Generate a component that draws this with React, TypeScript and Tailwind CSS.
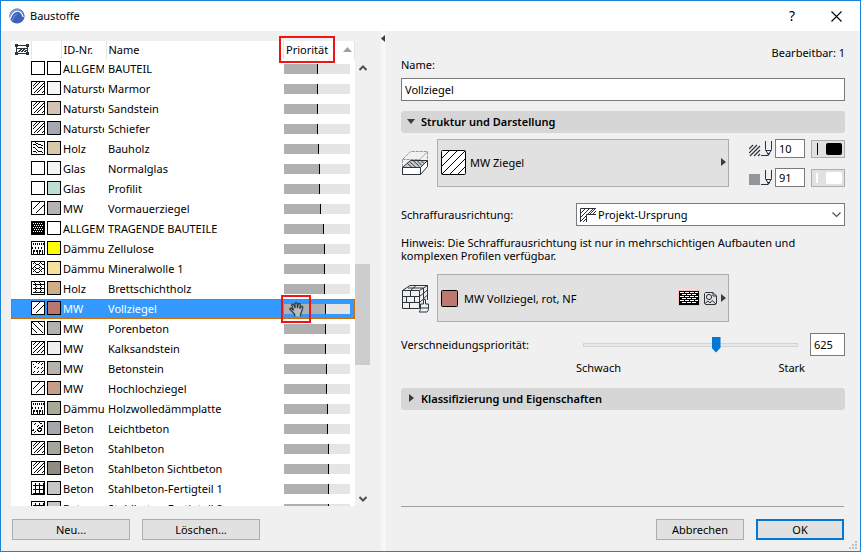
import React, { useState } from 'react';
import clsx from 'clsx';

type Hatch =
  | 'empty'
  | 'stone'
  | 'wood'
  | 'brick'
  | 'dots'
  | 'fill'
  | 'wool'
  | 'glulam'
  | 'back'
  | 'dense'
  | 'dashed'
  | 'light'
  | 'grid';

type Material = {
  hatch: Hatch;
  color: string;
  id: string;
  name: string;
  priority: number;
};

const materials: Material[] = [
  { hatch: 'empty', color: '#ffffff', id: 'ALLGEM', name: 'BAUTEIL', priority: 500 },
  { hatch: 'stone', color: '#f5f6f7', id: 'Naturste', name: 'Marmor', priority: 500 },
  { hatch: 'stone', color: '#d2c4b4', id: 'Naturste', name: 'Sandstein', priority: 500 },
  { hatch: 'stone', color: '#a5a9af', id: 'Naturste', name: 'Schiefer', priority: 500 },
  { hatch: 'wood', color: '#d9c9a9', id: 'Holz', name: 'Bauholz', priority: 516 },
  { hatch: 'empty', color: '#eff6f3', id: 'Glas', name: 'Normalglas', priority: 531 },
  { hatch: 'empty', color: '#bbdfd2', id: 'Glas', name: 'Profilit', priority: 531 },
  { hatch: 'brick', color: '#b5b4b2', id: 'MW', name: 'Vormauerziegel', priority: 546 },
  { hatch: 'dots', color: '#ffffff', id: 'ALLGEM', name: 'TRAGENDE BAUTEILE', priority: 592 },
  { hatch: 'fill', color: '#ffff00', id: 'Dämmun', name: 'Zellulose', priority: 607 },
  { hatch: 'wool', color: '#f6e09c', id: 'Dämmun', name: 'Mineralwolle 1', priority: 607 },
  { hatch: 'glulam', color: '#cfae86', id: 'Holz', name: 'Brettschichtholz', priority: 607 },
  { hatch: 'brick', color: '#bb776e', id: 'MW', name: 'Vollziegel', priority: 625 },
  { hatch: 'back', color: '#b2b1ae', id: 'MW', name: 'Porenbeton', priority: 625 },
  { hatch: 'dense', color: '#f0f0f0', id: 'MW', name: 'Kalksandstein', priority: 625 },
  { hatch: 'dashed', color: '#b5b3ac', id: 'MW', name: 'Betonstein', priority: 637 },
  { hatch: 'brick', color: '#c49e86', id: 'MW', name: 'Hochlochziegel', priority: 637 },
  { hatch: 'fill', color: '#a9aa96', id: 'Dämmun', name: 'Holzwolledämmplatte', priority: 652 },
  { hatch: 'light', color: '#a4a8ad', id: 'Beton', name: 'Leichtbeton', priority: 652 },
  { hatch: 'stone', color: '#a5a69b', id: 'Beton', name: 'Stahlbeton', priority: 668 },
  { hatch: 'stone', color: '#928b84', id: 'Beton', name: 'Stahlbeton Sichtbeton', priority: 668 },
  { hatch: 'grid', color: '#c6c6c6', id: 'Beton', name: 'Stahlbeton-Fertigteil 1', priority: 668 },
  { hatch: 'grid', color: '#c6c6c6', id: 'Beton', name: 'Stahlbeton-Fertigteil 2', priority: 668 },
];

// Coordinates are pixel indexes inside the 14px swatch
const hatchPaths: Record<Hatch, string> = {
  empty: '',
  stone: 'M1 5L5 1M1 8L8 1M2 12L12 2M5 12L12 5M10 12L12 10',
  wood: 'M1 3L4 3L7 6L10 6L12 8M1 6L3 6L7 10L10 10L12 12M4 1L7 3L9 3L12 5M1 10L4 10L6 12',
  brick: 'M1 8L8 1M4 12L12 4',
  dots: '',
  fill: 'M2 1V3M4 1V3M6 1V3M8 1V3M10 1V3M12 1V3M1 5V7M4 5V7M7 5V7M10 5V7M2 8V12M3 8V10M5 8V10M6 8V12M8 8V12M9 8V10M11 8V12',
  wool: 'M1 3L3 1L5 3L7 3L9 1L11 3L12 3M3 5L5 3M7 3L9 5M1 7L3 5L5 7L7 7L9 5L11 7L12 7M1 7L3 9L5 7M7 7L9 9L11 7M1 11L3 9L5 11L7 11L9 9L11 11',
  glulam: 'M1 3H12M1 7H12M1 11H12M3 1L5 3M8 1L10 3M3 7L5 5L3 3M8 7L10 5L8 3M3 11L5 9L3 7M8 11L10 9L8 7',
  back: 'M1 1L12 12M7 1L12 6M1 7L6 12',
  dense: 'M1 4L4 1M1 8L8 1M1 12L12 1M5 12L12 5M9 12L12 9',
  dashed: 'M1 4L2 3M4 2L5 1M2 7L4 5M6 3L8 1M1 12L3 10M5 8L7 6M9 4L11 2M5 12L7 10M9 8L11 6M9 12L12 9M1 9H1.5M11 11H11.5',
  light: 'M2 4L4 2M8 1L11 3M1 9L3 8M7 7L9 6L10 8L9 10L7 10L6 8ZM2 12L4 10M10 5L12 4M5 6L7 4M2 2H2.5',
  grid: 'M4 1V12M8 1V12M12 1V12M1 4H12M1 8H12M1 12H12',
};

const HatchIcon = ({ hatch }: { hatch: Hatch }) => (
  <svg width="14" height="14" viewBox="0 0 14 14" shapeRendering="crispEdges" className="block">
    <rect width="14" height="14" fill={hatch === 'dots' ? '#000' : '#fff'} />
    {hatch === 'dots' &&
      [2, 4, 6, 8, 10].map((y, row) =>
        [2, 4, 6, 8, 10].map((x) => (
          <rect key={`${x}-${y}`} x={row % 2 ? x + 1 : x} y={y} width="1" height="1" fill="#fff" />
        ))
      )}
    <g transform="translate(0.5 0.5)" fill="none" stroke="#000">
      <path d={hatchPaths[hatch]} />
      <path d="M0 0H13V13H0Z" />
    </g>
  </svg>
);

const Swatch = ({ color }: { color: string }) => (
  <svg width="14" height="14" viewBox="0 0 14 14" shapeRendering="crispEdges" className="block">
    <rect x="0.5" y="0.5" width="13" height="13" fill={color} stroke="#000" />
  </svg>
);

const AppLogo = () => (
  <svg width="16" height="16" viewBox="0 0 16 16">
    <circle cx="8" cy="8" r="7.6" fill="#3d62b8" />
    <path d="M0.8 10.5C2.5 5 5.5 2 9 2C11.5 2 13.5 4 15 7.5C14 2.5 11 0.3 7.8 0.4C3.5 0.5 0 4.5 0.8 10.5Z" fill="#7fa0dc" />
    <path d="M1 11C3 6 5.6 3.2 8.6 3.2C11.4 3.2 13 5.5 14.2 9" fill="none" stroke="#fff" strokeWidth="1.3" />
    <path d="M3 13C4.4 9.2 6 6.6 8.5 6" fill="none" stroke="#6d8fd4" strokeWidth="1.2" />
  </svg>
);

const FrameIcon = () => (
  <svg width="14" height="12" viewBox="0 0 14 12" shapeRendering="crispEdges">
    <path d="M1.5 1V10M12.5 1V10M1 1.5H13M1 9.5H13" stroke="#2b343a" fill="none" />
    <path d="M0 0h3v3H0zM11 0h3v3h-3zM0 8h3v3H0zM11 8h3v3h-3z" fill="#2b343a" />
    <path d="M2 4.5H12M3.5 8L6.5 5M6.5 8L9.5 5M9.5 8L11.5 6" stroke="#2b343a" fill="none" />
  </svg>
);

const HandCursor = () => (
  <svg width="15" height="15" viewBox="0 0 15 15">
    <path
      d="M6 14.5L5.5 12L1 7.5L1 6.3L2.3 6.2L4.6 8.3L2.7 3L3.6 2L4.8 2.8L6.2 6L6 1.5L7 0.5L8.2 1.5L8.4 6L9.3 2L10.5 1.4L11.3 2.5L10.8 6.8L12 4.5L13.2 4.2L13.8 5.4L12.5 10L11.5 12L11.7 14.5"
      fill="#b9bcbd"
      stroke="#2b3a40"
      strokeWidth="1.2"
    />
  </svg>
);

const CutFillIcon = () => (
  <svg width="28" height="26" viewBox="0 0 28 26">
    <path d="M1.5 17V9.5L9.5 1.5H26.5V10M1.5 9.5H19L26.5 1.5M19 9.5V16" fill="none" stroke="#90979b" strokeDasharray="3 1" />
    <path d="M1.5 17.5L9.5 10.5H26.5L19.5 17.5Z" fill="#c9cdcf" stroke="#2b343a" />
    <path d="M6 13L11 17.5M8 11L15 17.5M12 10.5L18.5 16.5M16 10.5L21 15.5M20 10.5L23 13.5" stroke="#2b343a" fill="none" />
    <path d="M1.5 17.5H19.5V24.5H1.5Z" fill="#fff" stroke="#2b343a" />
    <path d="M19.5 17.5L26.5 10.5V16.5L19.5 24.5Z" fill="#fff" stroke="#2b343a" />
  </svg>
);

const BrickIcon = () => (
  <svg width="28" height="29" viewBox="0 0 28 29" fill="none" stroke="#2b343a">
    <path d="M1.5 6.5H18.5V24.5H1.5ZM1.5 12.5H18.5M1.5 18.5H18.5" />
    <path d="M9.5 6.5V12.5M5.5 12.5V18.5M13.5 12.5V18.5M8.5 18.5V24.5" />
    <path d="M1.5 6.5L9 1.5H26.5L18.5 6.5M7 4L22 4M15 1.5L9.5 6.5M26.5 1.5V16M18.5 12.5L26.5 6M18.5 18.5L26.5 11M22.5 4V15" />
    <path d="M22.5 20V15.5H24.5V20H27.5V24H19.5V20H22.5M19.5 24C19.5 26 19 27 18 28H26C27 27 27.5 26 27.5 24" fill="#f0f0f0" />
  </svg>
);

const PenIcon = ({ solid }: { solid?: boolean }) => (
  <svg width="24" height="17" viewBox="0 0 24 17" className="shrink-0">
    {solid ? (
      <rect x="0" y="5" width="11" height="11" fill="#939799" />
    ) : (
      <path d="M0 9L4 5M0 13L8 5M1 16L11 6M5 16L11 10M9 16L11 14" stroke="#2b343a" strokeWidth="1.2" fill="none" />
    )}
    <path d="M12 15.5H19M16.5 1V9.5L19.5 15L22.5 9.5V1M16.5 10.5H22.5" stroke="#2b343a" fill="none" />
    <path d="M18 13H21L19.5 16Z" fill="#2b343a" />
  </svg>
);

const OriginIcon = () => (
  <svg width="16" height="14" viewBox="0 0 16 14">
    <path d="M0.5 14V0.5H16M6.5 14V6.5H16" fill="none" stroke="#2b343a" />
    <path d="M1 5L5 1M1 9L9 1M1 13L13 1M10 6L15 1M3 14L6 11M13 6L16 3" fill="none" stroke="#2b343a" />
  </svg>
);

const BrickPattern = () => (
  <svg width="22" height="16" viewBox="0 0 22 16" shapeRendering="crispEdges">
    <rect width="22" height="16" fill="#ffc0bb" />
    <rect x="1" y="1" width="20" height="14" fill="#000" />
    {[2, 4, 6, 8, 10, 12].map((y, row) =>
      (row % 2 ? [4, 9, 14] : [2, 7, 12, 17]).map((x) => (
        <rect key={`${x}-${y}`} x={x} y={y} width={x === 17 ? 3 : 4} height="1" fill="#fff" />
      ))
    )}
  </svg>
);

const TextureIcon = () => (
  <svg width="13" height="13" viewBox="0 0 13 13" fill="none" stroke="#2b343a">
    <path d="M1.5 0.5H9L12.5 4V11.5L11.5 12.5H1.5L0.5 11.5V1.5Z" />
    <path d="M9 0.5V4H12.5" />
    <circle cx="5" cy="5" r="2.6" />
    <path d="M1 11.5L4 9L6 11L8 8.5L12 12" />
  </svg>
);

const ArrowRight = () => (
  <svg width="5" height="8" viewBox="0 0 5 8" className="shrink-0">
    <path d="M0 0L5 4L0 8Z" fill="#3c3c3c" />
  </svg>
);

const Section = ({ title, open }: { title: string; open?: boolean }) => (
  <button className="flex h-[22px] w-full items-center rounded-[3px] bg-[#d6d6d6] px-1.5 pb-0.5 text-left font-semibold">
    <span className="flex w-3.5 items-center">
      {open ? (
        <svg width="8" height="5" viewBox="0 0 8 5">
          <path d="M0 0H8L4 5Z" fill="#3c3c3c" />
        </svg>
      ) : (
        <span className="pl-0.5">
          <ArrowRight />
        </span>
      )}
    </span>
    {title}
  </button>
);

const PushButton = ({ children, className }: { children: React.ReactNode; className: string }) => (
  <button className={clsx('h-[21px] bg-[#e1e1e1] leading-none', className)}>{children}</button>
);

const MaterialTable = ({ selected, onSelect }: { selected: number; onSelect: (i: number) => void }) => (
  <div className="min-w-0 flex-1 overflow-hidden bg-white">
    <table className="w-full table-fixed border-collapse">
      <colgroup>
        <col className="w-5" />
        <col className="w-[30px]" />
        <col className="w-[45px]" />
        <col />
        <col className="w-[71px]" />
      </colgroup>
      <thead>
        <tr className="h-[18px] text-left">
          <th className="border-r border-[#e5e5e5] p-0 pl-1">
            <FrameIcon />
          </th>
          <th className="border-r border-[#e5e5e5] p-0" />
          <th className="border-r border-[#e5e5e5] p-0 pb-0.5 pl-0.5 font-normal">ID-Nr.</th>
          <th className="border-r border-[#e5e5e5] p-0 pb-0.5 pl-0.5 font-normal">Name</th>
          <th className="border-r border-[#e5e5e5] p-0 pb-0.5 pl-0.5 font-normal">
            <div className="flex items-center justify-between pr-0.5">
              Priorität
              <svg width="9" height="5" viewBox="0 0 9 5">
                <path d="M4.5 0L9 5H0Z" fill="#a0a0a0" />
              </svg>
            </div>
          </th>
        </tr>
      </thead>
      <tbody>
        {materials.map((m, i) => (
          <tr
            key={m.name}
            onClick={() => onSelect(i)}
            className={clsx(
              'h-5',
              i === selected && 'bg-[#3399ff] text-white outline-1 -outline-offset-1 outline-dotted outline-[#cc6600]'
            )}
          >
            <td className="p-0" />
            <td className="p-0">
              <div className="flex h-5 w-8 gap-0.5 pt-0.5">
                <HatchIcon hatch={m.hatch} />
                <Swatch color={m.color} />
              </div>
            </td>
            <td className="p-0 pb-0.5 pl-0.5">
              <div className="w-[41px] overflow-hidden whitespace-nowrap">{m.id}</div>
            </td>
            <td className="p-0 pb-0.5 pl-0.5 whitespace-nowrap">{m.name}</td>
            <td className="p-0 pr-[5px]">
              <div className="h-2.5 bg-[#e5e5e5]">
                <div className="h-full border-r border-black bg-[#b0b0b0]" style={{ width: `${m.priority / 10 + 2}%` }} />
              </div>
            </td>
          </tr>
        ))}
      </tbody>
    </table>
  </div>
);

const ScrollBar = () => (
  <div className="flex w-[15px] flex-col items-center justify-between bg-[#f0f0f0] pt-6 pb-1">
    <svg width="8" height="6" viewBox="0 0 8 6">
      <path d="M0.5 5L4 1.5L7.5 5" fill="none" stroke="#505050" strokeWidth="2" />
    </svg>
    <div className="mt-[62px] h-[101px] w-full bg-[#cdcdcd]" />
    <svg width="8" height="6" viewBox="0 0 8 6">
      <path d="M0.5 1L4 4.5L7.5 1" fill="none" stroke="#505050" strokeWidth="2" />
    </svg>
  </div>
);

const App = () => {
  const [selected, setSelected] = useState(12);
  const [name, setName] = useState('Vollziegel');
  const [priority, setPriority] = useState(625);

  return (
    <div className="flex h-screen flex-col border border-[#1883d7] bg-[#f0f0f0] font-['Noto_Sans',sans-serif] text-[11px] leading-[13px] text-black">
      {/* Title bar */}
      <header className="flex h-[30px] shrink-0 items-center bg-white pl-2">
        <AppLogo />
        <h1 className="flex-1 pb-0.5 pl-[5px]">Baustoffe</h1>
        <button aria-label="Hilfe" className="w-10 text-sm">
          ?
        </button>
        <button aria-label="Schließen" className="flex w-12 justify-center">
          <svg width="11" height="11" viewBox="0 0 11 11">
            <path d="M0.5 0.5L10.5 10.5M10.5 0.5L0.5 10.5" stroke="#000" strokeWidth="1.1" />
          </svg>
        </button>
      </header>

      <div className="flex min-h-0 flex-1">
        {/* Material list */}
        <aside className="flex w-[380px] shrink-0 flex-col pt-2.5 pr-[11px] pb-[11px] pl-2.5">
          <div className="relative flex min-h-0 flex-1">
            <MaterialTable selected={selected} onSelect={setSelected} />
            <ScrollBar />
            {/* Callouts */}
            <div className="absolute -top-[5px] left-[268px] h-[27px] w-14 border-2 border-[#f01414]" />
            <div className="absolute top-[254px] left-[270px] flex h-7 w-[30px] items-center justify-center border-2 border-[#f01414]">
              <HandCursor />
            </div>
          </div>
          <div className="mt-[13px] flex gap-3 pl-px">
            <PushButton className="w-[118px] border border-[#adadad]">Neu...</PushButton>
            <PushButton className="w-[118px] border border-[#adadad]">Löschen...</PushButton>
          </div>
        </aside>

        <div className="w-[5px] shrink-0 bg-[#f7f7f7] pt-1">
          <svg width="4" height="7" viewBox="0 0 4 7">
            <path d="M4 0V7L0 3.5Z" fill="#3c3c3c" />
          </svg>
        </div>

        {/* Settings */}
        <main className="relative flex min-w-0 flex-1 flex-col px-[15px] pt-[15px] pb-[11px]">
          <div className="flex h-[25px] justify-between">
            <label htmlFor="name" className="self-end">
              Name:
            </label>
            <span>Bearbeitbar: 1</span>
          </div>
          <input
            id="name"
            value={name}
            onChange={(e) => setName(e.target.value)}
            className="mt-[7px] h-[23px] w-full border border-[#7a7a7a] bg-white px-[3px]"
          />

          <div className="mt-2.5">
            <Section title="Struktur und Darstellung" open />
          </div>

          <div className="mt-1.5 flex">
            <div className="flex w-9 items-center">
              <CutFillIcon />
            </div>
            <button className="flex h-12 flex-1 items-center border border-[#adadad] bg-[#e1e1e1] pr-0.5 pb-0.5 pl-[3px] text-left">
              <svg width="25" height="25" viewBox="0 0 25 25">
                <rect x="0.5" y="0.5" width="24" height="24" rx="1" fill="#fff" stroke="#000" />
                <path d="M1 8L8 1M1 16L16 1M1 24L24 1M9 24L24 9M17 24L24 17" stroke="#000" shapeRendering="crispEdges" />
              </svg>
              <span className="flex-1 pl-1">MW Ziegel</span>
              <ArrowRight />
            </button>
            <div className="flex w-[116px] flex-col justify-between pl-5">
              <div className="flex items-center gap-0.5">
                <PenIcon />
                <input aria-label="Schraffurstift" defaultValue="10" className="h-[19px] w-[30px] border border-[#7a7a7a] bg-white px-[3px] pb-px" />
                <button aria-label="Stiftfarbe" className="ml-1 flex h-[18px] flex-1 items-center justify-between border border-[#adadad] bg-[#e1e1e1] pr-0.5 pl-[5px]">
                  <span className="h-3 w-px bg-black" />
                  <span className="h-3 w-4 rounded-xs bg-black" />
                </button>
              </div>
              <div className="flex items-center gap-0.5">
                <PenIcon solid />
                <input aria-label="Hintergrundstift" defaultValue="91" className="h-[19px] w-[30px] border border-[#7a7a7a] bg-white px-[3px]" />
                <button aria-label="Hintergrundfarbe" className="ml-1 flex h-[18px] flex-1 items-center justify-between border border-[#adadad] bg-[#e1e1e1] pr-0.5 pl-1">
                  <span className="h-2.5 w-0.5 bg-white" />
                  <span className="h-3 w-4 rounded-xs bg-white" />
                </button>
              </div>
            </div>
          </div>

          <div className="mt-4 flex items-center">
            <label htmlFor="orientation" className="w-[175px]">
              Schraffurausrichtung:
            </label>
            <div className="relative flex-1">
              <select id="orientation" className="block h-[23px] w-full appearance-none border border-[#7a7a7a] bg-white pl-[21px] leading-[19px]">
                <option>Projekt-Ursprung</option>
              </select>
              <span className="pointer-events-none absolute inset-0 flex items-center justify-between px-1">
                <OriginIcon />
                <svg width="9" height="6" viewBox="0 0 9 6">
                  <path d="M0.5 0.5L4.5 4.5L8.5 0.5" fill="none" stroke="#505050" strokeWidth="1.2" />
                </svg>
              </span>
            </div>
          </div>

          <p className="mt-2.5">
            Hinweis: Die Schraffurausrichtung ist nur in mehrschichtigen Aufbauten und
            <br />
            komplexen Profilen verfügbar.
          </p>

          <div className="mt-3 flex pr-[116px]">
            <div className="flex w-9 items-center">
              <BrickIcon />
            </div>
            <button className="flex h-12 flex-1 items-center border border-[#adadad] bg-[#e1e1e1] pr-0.5 pl-[3px] text-left">
              <svg width="17" height="17" viewBox="0 0 17 17">
                <rect x="0.5" y="0.5" width="16" height="16" rx="1" fill="#bd786f" stroke="#000" />
              </svg>
              <span className="flex-1 pl-1.5">MW Vollziegel, rot, NF</span>
              <span className="flex items-center gap-1">
                <BrickPattern />
                <TextureIcon />
                <ArrowRight />
              </span>
            </button>
          </div>

          <div className="mt-[11px] flex items-center">
            <label htmlFor="priority" className="w-[182px]">
              Verschneidungspriorität:
            </label>
            <input
              id="priority"
              type="range"
              min="0"
              max="1000"
              value={priority}
              onChange={(e) => setPriority(Number(e.target.value))}
              className="h-4 min-w-0 flex-1 appearance-none bg-transparent [&::-webkit-slider-runnable-track]:h-1 [&::-webkit-slider-runnable-track]:border [&::-webkit-slider-runnable-track]:border-[#d0d4d4] [&::-webkit-slider-runnable-track]:bg-[#e7eaea] [&::-webkit-slider-thumb]:-mt-[7px] [&::-webkit-slider-thumb]:h-4 [&::-webkit-slider-thumb]:w-[9px] [&::-webkit-slider-thumb]:appearance-none [&::-webkit-slider-thumb]:bg-[#0078d7] [&::-webkit-slider-thumb]:[clip-path:polygon(0_0,100%_0,100%_70%,50%_100%,0_70%)]"
            />
            <input
              aria-label="Priorität"
              value={priority}
              onChange={(e) => setPriority(Number(e.target.value) || 0)}
              className="ml-3 h-[23px] w-[35px] border border-[#7a7a7a] bg-white px-[3px]"
            />
          </div>
          <div className="mt-[5px] flex justify-between pr-10 pl-[175px]">
            <span>Schwach</span>
            <span>Stark</span>
          </div>

          <div className="mt-3.5">
            <Section title="Klassifizierung und Eigenschaften" />
          </div>

          <footer className="mt-auto">
            <div className="mr-px h-px bg-[#a0a0a0]" />
            <div className="mt-3 mr-px flex justify-end gap-3">
              <PushButton className="w-[88px] border border-[#adadad]">Abbrechen</PushButton>
              <PushButton className="w-[88px] border-2 border-[#0078d7]">OK</PushButton>
            </div>
          </footer>

          {/* Resize grip */}
          <svg width="8" height="8" viewBox="0 0 8 8" className="absolute right-[3px] bottom-0.5">
            <path d="M6 0h2v2H6zM3 3h2v2H3zM6 3h2v2H6zM0 6h2v2H0zM3 6h2v2H3zM6 6h2v2H6z" fill="#bfbfbf" />
          </svg>
        </main>
      </div>
    </div>
  );
};

export default App;
